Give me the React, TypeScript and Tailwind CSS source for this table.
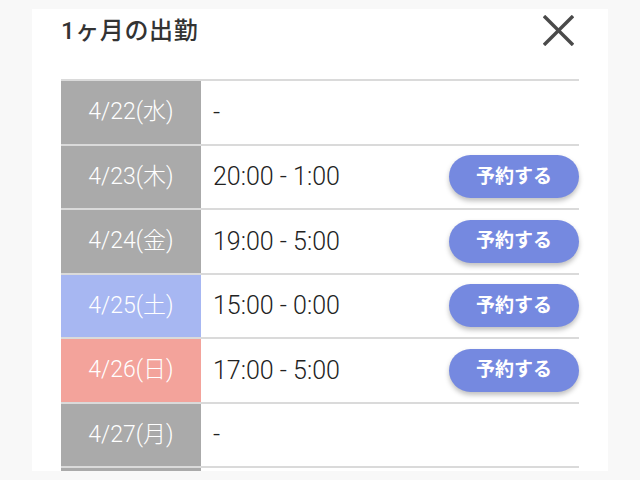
type Shift = {
  date: string;
  time: string | null;
  tone: "weekday" | "sat" | "sun";
};

const shifts: Shift[] = [
  { date: "4/22(水)", time: null, tone: "weekday" },
  { date: "4/23(木)", time: "20:00 - 1:00", tone: "weekday" },
  { date: "4/24(金)", time: "19:00 - 5:00", tone: "weekday" },
  { date: "4/25(土)", time: "15:00 - 0:00", tone: "sat" },
  { date: "4/26(日)", time: "17:00 - 5:00", tone: "sun" },
  { date: "4/27(月)", time: null, tone: "weekday" },
];

const toneClass = {
  weekday: "bg-[#aaaaaa]",
  sat: "bg-[#a7b7f2]",
  sun: "bg-[#f3a39b]",
};

export default function App() {
  return (
    <div
      className="w-[640px] h-[480px] bg-[#f8f8f8] pt-[9px] overflow-hidden"
      style={{ fontFamily: 'Roboto, "Noto Sans CJK JP", sans-serif' }}
    >
      <div className="ml-[32px] w-[576px] h-[462px] bg-white overflow-hidden px-[29px]">
        {/* Header */}
        <div className="flex items-start justify-between h-[70px]">
          <h1 className="mt-[4px] text-[24px] font-medium text-[#333] tracking-wide">
            1ヶ月の出勤
          </h1>
          <svg
            className="mt-[6px] mr-[5px] w-[31px] h-[31px]"
            viewBox="0 0 31 31"
            fill="none"
            stroke="#4a4a4a"
            strokeWidth={3.4}
          >
            <line x1="1" y1="1" x2="30" y2="30" />
            <line x1="30" y1="1" x2="1" y2="30" />
          </svg>
        </div>

        {/* Shift table */}
        <div className="border-t-2 border-[#dadada]">
          {shifts.map((s) => (
            <div
              key={s.date}
              className="flex h-[64.5px] border-b-2 border-[#dadada]"
            >
              <div
                className={`w-[140px] shrink-0 flex items-center justify-center text-white text-[23px] font-light ${toneClass[s.tone]}`}
              >
                {s.date}
              </div>
              <div className="flex-1 flex items-center justify-between pl-[12px]">
                <span className="text-[25px] font-light text-[#222]">{s.time ?? "-"}</span>
                {s.time && (
                  <button className="w-[130px] h-[43px] rounded-full bg-[#7589e0] text-white text-[19px] font-bold shadow-[0_3px_5px_rgba(0,0,0,0.25)]">
                    予約する
                  </button>
                )}
              </div>
            </div>
          ))}
          <div className="flex h-[20px]">
            <div className="w-[140px] bg-[#aaaaaa]" />
          </div>
        </div>
      </div>
    </div>
  );
}
